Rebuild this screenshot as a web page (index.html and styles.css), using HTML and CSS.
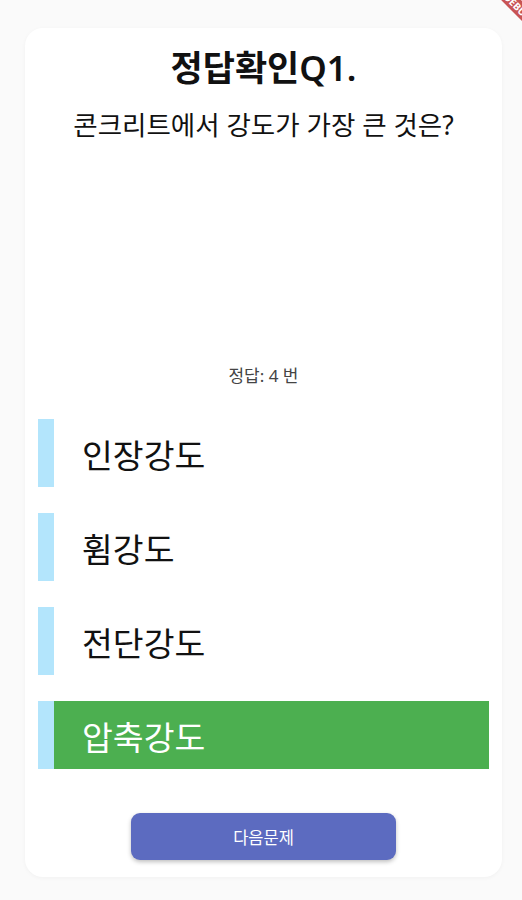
FILE: index.html
```html
<!DOCTYPE html>
<html lang="ko">
<head>
    <meta charset="UTF-8">
    <meta name="viewport" content="width=device-width, initial-scale=1.0">
    <title>정답확인</title>
    <link rel="stylesheet" href="styles.css">
</head>
<body>
    <div class="debug-banner">DEBUG</div>
    <div class="quiz-card">
        <div class="quiz-title">정답확인Q1.</div>
        <div class="quiz-question">콘크리트에서 강도가 가장 큰 것은?</div>
        <div class="quiz-answer">정답: 4 번</div>
        <div class="options">
            <div class="option">
                <div class="option-bar"></div>
                <div class="option-text">인장강도</div>
            </div>
            <div class="option">
                <div class="option-bar"></div>
                <div class="option-text">휨강도</div>
            </div>
            <div class="option">
                <div class="option-bar"></div>
                <div class="option-text">전단강도</div>
            </div>
            <div class="option correct">
                <div class="option-bar"></div>
                <div class="option-text">압축강도</div>
            </div>
        </div>
        <div class="button-row">
            <button class="next-button">다음문제</button>
        </div>
    </div>
</body>
</html>
```

FILE: styles.css
```css
body {
    font-family: "Noto Sans", "Noto Sans CJK KR", sans-serif;
    margin: 0;
    padding: 28px 20px 23px 25px;
    height: 900px;
    box-sizing: border-box;
    background-color: #fafafa;
    overflow: hidden;
    position: relative;
}
.debug-banner {
    position: absolute;
    left: 473px;
    top: 0;
    width: 90px;
    height: 14px;
    line-height: 14px;
    transform: rotate(45deg);
    background-color: rgba(183, 28, 28, 0.75);
    color: white;
    font-size: 10px;
    font-weight: bold;
    text-align: center;
}
.quiz-card {
    height: 849px;
    box-sizing: border-box;
    background-color: #fff;
    border-radius: 18px;
    box-shadow: 0 1px 4px rgba(0, 0, 0, 0.04);
    padding: 20px 13px 0 13px;
    display: flex;
    flex-direction: column;
}
.quiz-title {
    font-size: 35px;
    line-height: 40px;
    font-weight: 600;
    text-align: center;
    color: #111;
}
.quiz-question {
    margin-top: 21px;
    font-size: 26.5px;
    line-height: 32px;
    text-align: center;
    color: #111;
}
.quiz-answer {
    margin-top: 225px;
    font-size: 17px;
    line-height: 20px;
    text-align: center;
    color: #444;
}
.options {
    margin-top: 33px;
    display: flex;
    flex-direction: column;
    gap: 26px;
}
.option {
    height: 68px;
    display: flex;
    align-items: center;
}
.option-bar {
    width: 16px;
    height: 100%;
    background-color: #b3e5fc;
}
.option-text {
    flex: 1;
    height: 100%;
    display: flex;
    align-items: center;
    padding-left: 28px;
    font-size: 33.5px;
    color: #111;
}
.option.correct .option-text {
    background-color: #4caf50;
    color: #fff;
}
.button-row {
    margin-top: 44px;
    display: flex;
    justify-content: center;
}
.next-button {
    width: 265px;
    height: 47px;
    border: none;
    border-radius: 9px;
    background-color: #5c6bc0;
    color: white;
    font-family: "Noto Sans", "Noto Sans CJK KR", sans-serif;
    font-size: 16.5px;
    box-shadow: 0 2px 4px rgba(0, 0, 0, 0.25);
}
```
